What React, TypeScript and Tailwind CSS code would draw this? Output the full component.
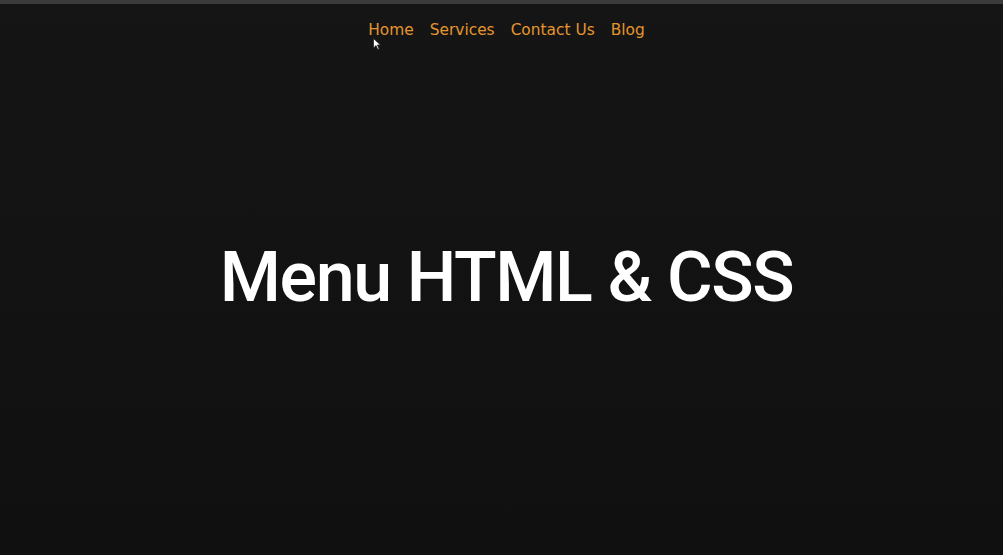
export default function App() {
  const links = ['Home', 'Services', 'Contact Us', 'Blog'];

  return (
    <div className="relative h-[555px] w-full overflow-hidden bg-gradient-to-b from-[#151515] to-[#101010]">
      <div className="h-[4px] bg-[#3b3b3b]" />

      <nav className="flex justify-center pt-[15px] pl-[10px]">
        <ul className="flex gap-[16px] font-['DejaVu_Sans',sans-serif] text-[15.4px] text-[#e4952e]">
          {links.map((l) => (
            <li key={l}>
              <a href="#" className="block">
                {l}
              </a>
            </li>
          ))}
        </ul>
      </nav>

      <h1 className="mt-[200px] pl-[10px] text-center font-['Roboto',sans-serif] text-[70px] font-medium leading-none tracking-[-1.4px] text-white">
        Menu HTML &amp; CSS
      </h1>

      {/* mouse cursor */}
      <svg className="absolute left-[373px] top-[38px]" width="8" height="12" viewBox="0 0 8 12">
        <path d="M0.5 0.5 L0.5 10 L3 7.6 L4.8 11.5 L6.2 10.8 L4.4 7 L7.5 7 Z" fill="#fff" stroke="#222" strokeWidth="0.8" />
      </svg>
    </div>
  );
}
